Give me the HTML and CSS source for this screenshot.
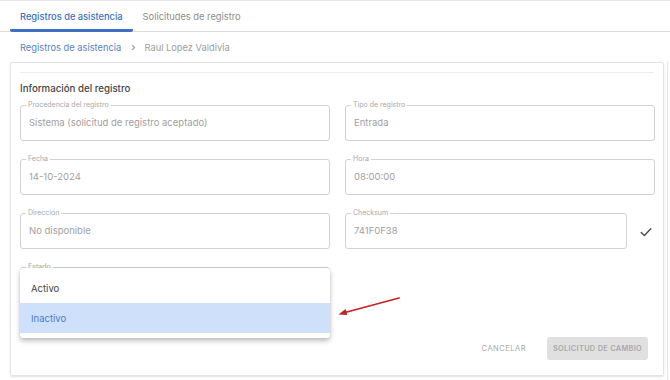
FILE: index.html
```html
<!DOCTYPE html>
<html lang="es">
<head>
<meta charset="utf-8">
<title>Registros de asistencia</title>
<link rel="stylesheet" href="styles.css">
</head>
<body>
<div class="page">
  <nav class="tabs">
    <div class="tab active">Registros de asistencia</div>
    <div class="tab">Solicitudes de registro</div>
  </nav>
  <div class="crumbs">
    <span class="crumb-link">Registros de asistencia</span>
    <span class="crumb-sep">›</span>
    <span class="crumb-current">Raul Lopez Valdivia</span>
  </div>
  <div class="content">
    <section class="card">
      <div class="divider"></div>
      <h2 class="title">Información del registro</h2>
      <div class="grid">
        <div class="cell">
          <fieldset class="field"><legend>Procedencia del registro</legend><div class="value">Sistema (solicitud de registro aceptado)</div></fieldset>
        </div>
        <div class="cell">
          <fieldset class="field"><legend>Tipo de registro</legend><div class="value">Entrada</div></fieldset>
        </div>
        <div class="cell">
          <fieldset class="field"><legend>Fecha</legend><div class="value">14-10-2024</div></fieldset>
        </div>
        <div class="cell">
          <fieldset class="field"><legend>Hora</legend><div class="value">08:00:00</div></fieldset>
        </div>
        <div class="cell">
          <fieldset class="field"><legend>Dirección</legend><div class="value">No disponible</div></fieldset>
        </div>
        <div class="cell with-icon">
          <fieldset class="field"><legend>Checksum</legend><div class="value">741F0F38</div></fieldset>
          <svg class="check" width="14" height="14" viewBox="0 0 14 14"><path d="M2.2 7.4 L5.4 10.4 L11.8 3.8" fill="none" stroke="#4a4a4a" stroke-width="1.4" stroke-linecap="round" stroke-linejoin="round"/></svg>
        </div>
        <div class="cell estado">
          <fieldset class="field"><legend>Estado</legend><div class="value">&nbsp;</div></fieldset>
          <ul class="menu">
            <li class="option">Activo</li>
            <li class="option selected">Inactivo</li>
          </ul>
        </div>
      </div>
      <div class="actions">
        <button class="btn-text">CANCELAR</button>
        <button class="btn-disabled">SOLICITUD DE CAMBIO</button>
      </div>
      <svg class="arrow" width="70" height="30" viewBox="0 0 70 30">
        <line x1="62" y1="8" x2="8" y2="22.5" stroke="#c8201f" stroke-width="1.8" stroke-linecap="round"/>
        <polygon points="1.5,24.5 8.6,19 10.2,25" fill="#c8201f"/>
      </svg>
    </section>
  </div>
</div>
</body>
</html>
```

FILE: styles.css
```css
* { box-sizing: border-box; }
html, body { margin: 0; padding: 0; background: #fff; }
body {
  font-family: "Inter", "Noto Sans", "DejaVu Sans", sans-serif;
  width: 670px;
  height: 380px;
  overflow: hidden;
}
.page { border-top: 1px solid #e8e8e8; }

.tabs {
  display: flex;
  height: 31px;
  padding-left: 10px;
  border-bottom: 1px solid #dcdcdc;
}
.tab {
  display: flex;
  align-items: center;
  padding: 0 10px;
  font-size: 9.3px;
  color: #8c8c8c;
}
.tab.active {
  color: #3e6fc2;
  font-weight: 500;
  border-bottom: 3px solid #3e6fc2;
  border-radius: 0 0 2px 2px;
  margin-bottom: -1px;
  padding-top: 2px;
}

.crumbs {
  display: flex;
  align-items: center;
  height: 30px;
  padding-left: 20px;
  font-size: 9.3px;
}
.crumb-link { color: #5a82c2; }
.crumb-sep { color: #888; margin: 0 9px 0 10px; font-size: 11px; }
.crumb-current { color: #9e9e9e; }

.content {
  width: 668px;
  border-right: 1px solid #e6e6e6;
  padding: 0 3px 6px 10px;
}
.card {
  position: relative;
  width: 654px;
  border: 1px solid #e4e4e4;
  border-radius: 2px;
  box-shadow: 0 1px 2px rgba(0,0,0,0.12);
  padding: 9px 9px 15px 9px;
}
.divider {
  height: 1px;
  background: #ececec;
}
.title {
  margin: 9px 0 5px;
  font-size: 9.7px;
  line-height: 14px;
  font-weight: 500;
  color: #454545;
}

.grid {
  display: grid;
  grid-template-columns: 310px 310px;
  column-gap: 15px;
  row-gap: 14px;
}
.cell { position: relative; }
.with-icon { display: flex; align-items: center; }
.with-icon .field { width: 282px; flex: none; }
.check { margin: 5px 0 0 12px; }

.field {
  margin: 0;
  min-width: 0;
  height: 40px;
  border: 1px solid #d2d2d2;
  border-radius: 3px;
  padding: 0 8px 0 8px;
}
.field legend {
  margin-left: -3px;
  padding: 0 2px;
  font-size: 7px;
  line-height: 8px;
  color: #a8a8a8;
}
.value {
  padding-top: 7px;
  font-size: 9.5px;
  line-height: 14px;
  color: #a0a0a0;
}

.menu {
  position: absolute;
  top: 5px;
  left: 0;
  width: 310px;
  margin: 0;
  padding: 5px 0;
  list-style: none;
  background: #fff;
  border-radius: 3px;
  box-shadow: 0 3px 5px rgba(0,0,0,0.25), 0 0 2px rgba(0,0,0,0.1);
}
.option {
  height: 30px;
  display: flex;
  align-items: center;
  padding-left: 11px;
  font-size: 9.5px;
  color: #444;
}
.option.selected {
  background: #cfe0fb;
  color: #4a7ccb;
}

.actions {
  display: flex;
  justify-content: flex-end;
  align-items: center;
  gap: 13px;
  margin-top: 34px;
  padding-right: 6px;
}
button {
  font-family: inherit;
  border: none;
  cursor: default;
}
.btn-text {
  background: none;
  color: #a8a8a8;
  font-size: 7.5px;
  letter-spacing: 0.5px;
  padding: 0 8px;
  height: 23px;
}
.btn-disabled {
  background: #e0e0e0;
  color: #a8a8a8;
  font-size: 7.3px;
  font-weight: 600;
  letter-spacing: 0.35px;
  height: 23px;
  width: 101px;
  padding: 0;
  border-radius: 3px;
}

.arrow {
  position: absolute;
  left: 326px;
  top: 227px;
}
```
